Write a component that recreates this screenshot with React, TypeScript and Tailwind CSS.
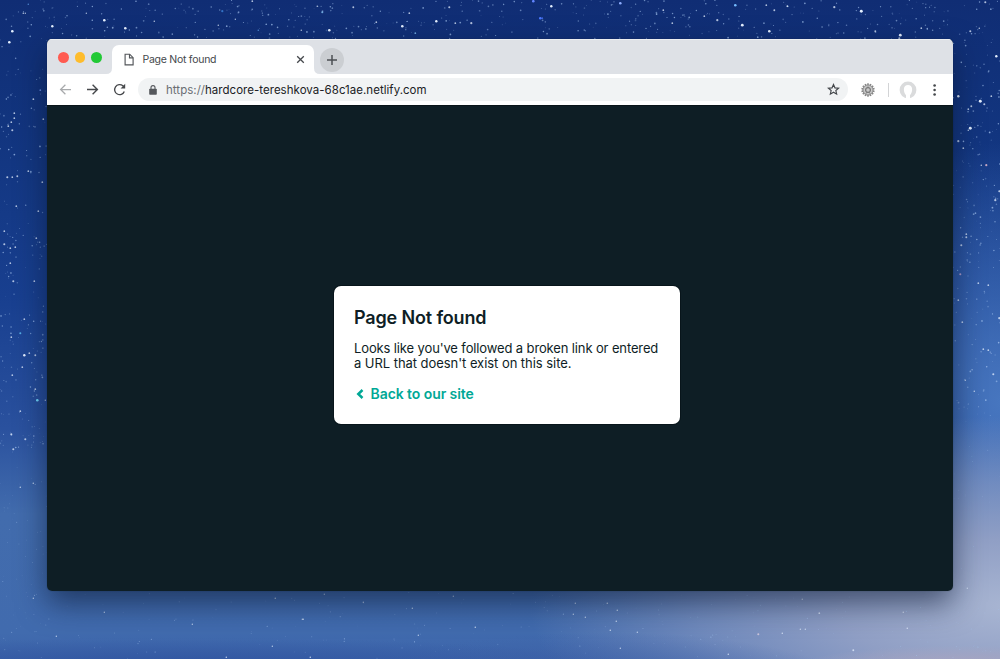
import React from "react";

type Star = [x: number, y: number, r: number, color?: string];

const brightStars: Star[] = [
  [12, 31, 1.5], [9, 42, 1.5], [52, 26, 1.4], [104, 20, 1.5], [125, 28, 1.5], [23, 13, 0.9], [25, 13, 0.8], [28, 4, 0.9, "#62a0e8"],
  [86, 13, 0.8], [154, 21, 0.9], [218, 25, 0.9], [222, 11, 1.3, "#3f8ae0"], [252, 1, 1], [235, 19, 0.8], [258, 30, 0.9, "#65a8ef"],
  [301, 30, 0.9], [329, 30, 1.5], [322, 12, 1.2, "#8ccfff"], [317, 6, 0.9], [353, 7, 1.1], [376, 22, 1], [402, 26, 1.5], [409, 13, 1],
  [436, 21, 1.4], [449, 7, 1.2], [471, 23, 1.3], [455, 23, 1], [415, 33, 1, "#8fcfff"], [533, 1, 1.5, "#6385ff"], [551, 6, 1.4],
  [540, 18, 1.5, "#4c78ff"], [542, 18, 1, "#4c78ff"], [620, 3, 1.5, "#8eaeff"], [735, 5, 1.5, "#75bcff"], [742, 25, 1.6], [717, 20, 1.3],
  [704, 16, 1], [663, 10, 1], [672, 23, 1], [769, 31, 1.5], [766, 5, 1], [774, 10, 1.1], [787, 6, 1], [861, 11, 1.7], [834, 7, 1.3],
  [900, 35, 1.6], [899, 38, 1.2], [875, 31, 1.1], [921, 28, 1], [970, 31, 1.2], [985, 2, 1.2], [996, 56, 1.4], [979, 28, 0.9],
  [958, 96, 1.4], [980, 101, 1.7], [984, 104, 1.2], [970, 128, 1.7], [968, 130, 0.9], [958, 141, 1.3], [963, 148, 1],
  [986, 165, 1.3, "#ffc9d5"], [981, 165, 0.9], [995, 200, 1.3], [999, 191, 1.2], [991, 96, 1], [971, 106, 1.1], [968, 109, 1],
  [961, 245, 1.2], [966, 234, 1], [966, 237, 1.1], [960, 274, 1.2, "#ddb5da"], [978, 283, 1], [988, 285, 1], [958, 300, 1],
  [999, 318, 1.3], [962, 322, 1], [983, 349, 1], [988, 350, 1], [993, 374, 1.2], [965, 380, 0.9], [974, 391, 0.9],
  [40, 90, 1, "#85a9ff"], [33, 99, 1], [14, 113, 1], [14, 118, 1], [11, 122, 1], [12, 130, 1.2], [8, 126, 1], [43, 119, 1],
  [7, 177, 1.2], [12, 177, 1], [17, 176, 1.1], [28, 171, 1], [42, 182, 1], [38, 211, 1], [16, 206, 1], [4, 244, 1.2], [4, 231, 1],
  [36, 238, 1], [10, 248, 1], [15, 247, 1], [10, 263, 1], [13, 281, 1.2], [34, 281, 1], [24, 319, 1], [24, 355, 1.4], [20, 333, 1.2, "#65d0ff"],
  [35, 355, 1.1], [29, 353, 1], [11, 337, 1], [12, 375, 1], [22, 367, 1], [37, 400, 1.5, "#73dcff"], [35, 389, 1], [20, 411, 1],
  [11, 434, 1.2], [25, 439, 1.2], [13, 449, 1.2], [33, 483, 0.9], [20, 487, 0.9], [45, 400, 0.8],
  [33, 598, 0.8], [104, 612, 0.8], [275, 598, 0.9], [324, 594, 0.8], [363, 602, 0.8], [302, 619, 0.8], [303, 619, 0.8], [453, 596, 0.8],
  [412, 608, 0.8], [475, 627, 0.9], [418, 635, 0.8], [272, 646, 0.8], [226, 657, 0.9], [310, 657, 0.9], [56, 636, 0.8], [192, 624, 0.8],
  [607, 603, 0.9], [617, 610, 0.9], [575, 603, 0.8], [573, 614, 0.8], [585, 617, 0.8], [616, 621, 0.9], [610, 630, 0.9], [637, 632, 0.8],
  [802, 599, 0.9], [819, 613, 1], [903, 612, 0.9], [758, 634, 1.2, "#e3d3e3"], [782, 633, 0.9], [853, 650, 1.1], [728, 654, 0.9],
  [907, 628, 0.9], [800, 629, 0.8], [805, 629, 0.8], [967, 588, 0.8], [620, 648, 0.8],
];

function makeStars(): Star[] {
  let seed = 41723;
  const next = () => {
    seed = (seed * 1664525 + 1013904223) >>> 0;
    return seed / 4294967296;
  };
  const result: Star[] = [];
  const fill = (count: number, x: number, y: number, w: number, h: number, size: number) => {
    for (let i = 0; i < count; i++) {
      result.push([x + next() * w, y + next() * h, (0.3 + next() * 0.45) * size]);
    }
  };
  fill(460, 0, 0, 1000, 39, 1.2);
  fill(180, 0, 39, 47, 410, 1.2);
  fill(180, 953, 39, 47, 370, 1.2);
  fill(70, 0, 410, 47, 249, 0.7);
  fill(40, 953, 410, 47, 249, 0.6);
  fill(190, 0, 592, 1000, 67, 0.8);
  return result;
}

const faintStars = makeStars();

function StarField() {
  return (
    <svg className="absolute inset-0" width="1000" height="659" viewBox="0 0 1000 659" aria-hidden="true">
      <g fill="#a9c8f2">
        {faintStars.map(([x, y, r], i) => (
          <circle key={i} cx={x} cy={y} r={r} opacity={0.25 + ((i * 37) % 50) / 100} />
        ))}
      </g>
      <g fill="#e5f0ff">
        {brightStars.map(([x, y, r, color], i) => (
          <circle key={i} cx={x + 0.3} cy={y + 0.2} r={r * 0.86} fill={color} opacity={r > 1.3 ? 1 : 0.75} />
        ))}
      </g>
    </svg>
  );
}

function TabBar() {
  return (
    <div className="flex h-[35px] bg-[#dee1e6] shadow-[inset_0_1px_0_#eceef0]">
      <div className="flex w-[65px] gap-[6px] pt-[13px] pl-[11px]">
        <span className="size-[10.5px] rounded-full bg-[#ff5b51]" />
        <span className="size-[10.5px] rounded-full bg-[#febc2c]" />
        <span className="size-[10.5px] rounded-full bg-[#22c936]" />
      </div>
      <div className="relative mt-[6px] flex h-[29px] w-[202px] items-center rounded-t-[7px] bg-white pr-[9px] pl-[12px]">
        <svg className="absolute bottom-0 -left-[6px]" width="6" height="6" viewBox="0 0 6 6" fill="#fff">
          <path d="M6 0v6H0q6 0 6-6Z" />
        </svg>
        <svg className="absolute -right-[6px] bottom-0" width="6" height="6" viewBox="0 0 6 6" fill="#fff">
          <path d="M0 0v6h6Q0 6 0 0Z" />
        </svg>
        <svg width="10" height="13" viewBox="0 0 10 13" fill="none" stroke="#53565a" strokeWidth="1.15">
          <path d="M1.1 1.2h4.6l3.4 3.5v7.1h-8V1.2Z" />
          <path d="M5.5 1.2v3.7h3.6" />
        </svg>
        <span className="mt-px ml-[8.5px] text-[10.5px] leading-[14px] tracking-[-0.26px] whitespace-nowrap text-[#45484c]">Page Not found</span>
        <svg className="ml-auto" width="9" height="9" viewBox="0 0 9 9" stroke="#45484c" strokeWidth="1.3">
          <path d="m1.2 1.2 6.6 6.6m0-6.6L1.2 7.8" />
        </svg>
      </div>
      <div className="mt-[9px] ml-[6px] flex size-[24px] items-center justify-center rounded-full bg-[#cbced2]">
        <svg width="12" height="12" viewBox="0 0 12 12" stroke="#4c4f53" strokeWidth="1.5">
          <path d="M6 1v10M1 6h10" />
        </svg>
      </div>
    </div>
  );
}

function Gear() {
  const teeth = Array.from({ length: 14 }, (_, i) => (i * 360) / 14);
  return (
    <svg width="14" height="14" viewBox="0 0 14 14" fill="none">
      {teeth.map((angle) => (
        <path key={angle} d="M7 .3v2" stroke="#858585" strokeWidth="1.5" transform={`rotate(${angle} 7 7)`} />
      ))}
      <circle cx="7" cy="7" r="5.2" fill="#b0b0b0" stroke="#8c8c8c" strokeWidth=".8" />
      <circle cx="7" cy="7" r="3.7" stroke="#dadada" strokeWidth=".7" />
      <circle cx="7" cy="7" r="2.5" fill="#b5b5b5" stroke="#6c6c6c" strokeWidth=".9" />
      <path d="m5.8 9-1 2M8.2 9l1 2M7 4.6V3" stroke="#777" strokeWidth=".6" />
      <circle cx="7" cy="7" r="1" fill="#d2d2d2" />
    </svg>
  );
}

function Toolbar() {
  return (
    <div className="flex h-[31px] items-center bg-white pl-[12px]">
      <svg width="13" height="12" viewBox="0 0 13 12" fill="none" stroke="#a9abad" strokeWidth="1.25">
        <path d="M12 5.5H1.6M6.4.7 1.6 5.5l4.8 4.8" />
      </svg>
      <svg className="ml-[14px]" width="13" height="12" viewBox="0 0 13 12" fill="none" stroke="#47494c" strokeWidth="1.4">
        <path d="M1 5.5h10.4M6.6.7l4.8 4.8-4.8 4.8" />
      </svg>
      <svg className="ml-[14px]" width="13" height="13" viewBox="0 0 13 13" fill="none">
        <path d="M11.3 8.4A5 5 0 1 1 9.9 2.8l1.2 1.2" stroke="#47494c" strokeWidth="1.35" />
        <path d="M12.2.8v4.6H7.6Z" fill="#47494c" />
      </svg>
      <div className="ml-[12px] flex h-[23px] w-[710px] items-center rounded-full bg-[#f1f3f4] pr-[8px] pl-[11px]">
        <svg width="8" height="10" viewBox="0 0 8 10">
          <rect x=".2" y="3.7" width="7.6" height="6.1" rx=".8" fill="#55585c" />
          <path d="M2 4V2.6a2 2 0 0 1 4 0V4" fill="none" stroke="#55585c" strokeWidth="1.1" />
        </svg>
        <span className="ml-[9px] text-[11.5px] leading-[16px] tracking-[0.03px] whitespace-nowrap text-[#202124]">
          <span className="text-[#6a6e73]">https://</span>hardcore-tereshkova-68c1ae.netlify.com
        </span>
        <svg className="ml-auto" width="13" height="13" viewBox="0 0 13 13" fill="none" stroke="#45484c" strokeWidth="1.15">
          <path d="m6.5 1.5 1.45 3.35 3.65.33-2.75 2.4.82 3.57L6.5 9.26l-3.17 1.89.82-3.57-2.75-2.4 3.65-.33Z" />
        </svg>
      </div>
      <div className="ml-[13px] flex"><Gear /></div>
      <span className="ml-[13px] h-[14px] w-px bg-[#d3d4d6]" />
      <svg className="ml-[10px]" width="18" height="18" viewBox="0 0 18 18">
        <circle cx="9" cy="9" r="8.4" fill="#dadbdc" />
        <path d="M7 18v-3.8C5.4 12.4 4.8 10.4 4.9 8.1 5 5.7 6.7 4.1 9 4.1s4 1.6 4.1 4c.1 2.3-.5 4.3-2.1 6.1V18Z" fill="#fff" />
      </svg>
      <svg className="ml-[15px]" width="6" height="14" viewBox="0 0 6 14" fill="#45484c">
        <circle cx="2.6" cy="2.5" r="1.3" />
        <circle cx="2.6" cy="7" r="1.3" />
        <circle cx="2.6" cy="11.5" r="1.3" />
      </svg>
    </div>
  );
}

function NotFoundCard() {
  return (
    <section className="mt-[181px] h-[138px] w-[346px] rounded-[7px] bg-white pt-[20px] pl-[20.5px] text-[#0e1e25] shadow-[0_0_0_1px_#08151b]">
      <h1 className="text-[18px] leading-[24px] font-semibold tracking-[-0.15px] whitespace-nowrap">Page Not found</h1>
      <p className="mt-[11px] text-[13px] leading-[15px] tracking-[-0.13px] whitespace-nowrap">
        Looks like you've followed a broken link or entered
        <br />
        <span className="tracking-[-0.05px]">a URL that doesn't exist on this site.</span>
      </p>
      <a className="mt-[13px] flex h-[20px] items-center pl-[2px] text-[14px] leading-[20px] font-semibold tracking-[-0.07px] whitespace-nowrap text-[#00a896]">
        <svg className="mr-[6.5px]" width="8" height="10" viewBox="0 0 8 10" fill="none" stroke="currentColor" strokeWidth="2.5">
          <path d="M6.5 1 2.3 5l4.2 4" />
        </svg>
        Back to our site
      </a>
    </section>
  );
}

export default function App() {
  return (
    <main className="relative h-[659px] w-[1000px] overflow-hidden bg-[radial-gradient(ellipse_160px_20px_at_96%_101%,#aaa5c0_0%,transparent_100%),radial-gradient(ellipse_260px_60px_at_60%_105%,#3f61a6_0%,#3f61a680_50%,#3f61a600_100%),radial-gradient(ellipse_480px_190px_at_101%_92%,#a8b5d2_0%,#909fc5_35%,#8598c3b0_65%,#7c92c200_100%),radial-gradient(ellipse_450px_28px_at_18%_101%,#3155a0_0%,#3155a000_100%),radial-gradient(ellipse_180px_260px_at_100%_61%,#4776bf_0%,#4776bf00_100%),linear-gradient(180deg,#102d74_0%,#12357f_20%,#183f8f_45%,#2a519e_65%,#426cad_78%,#416bae_96%,#3c64aa_100%)] px-[47px] pt-[39px] font-['Inter',sans-serif]">
      <StarField />
      <div className="relative h-[552px] w-[906px] rounded-[5px] shadow-[0_0_1px_#09182580,0_12px_30px_#0a173299]">
        <div className="h-full overflow-hidden rounded-[5px] bg-[#0e1e25]">
          <TabBar />
          <Toolbar />
          <div className="flex h-[486px] justify-center pl-[13px] shadow-[inset_0_1px_0_#091419]">
            <NotFoundCard />
          </div>
        </div>
      </div>
    </main>
  );
}
